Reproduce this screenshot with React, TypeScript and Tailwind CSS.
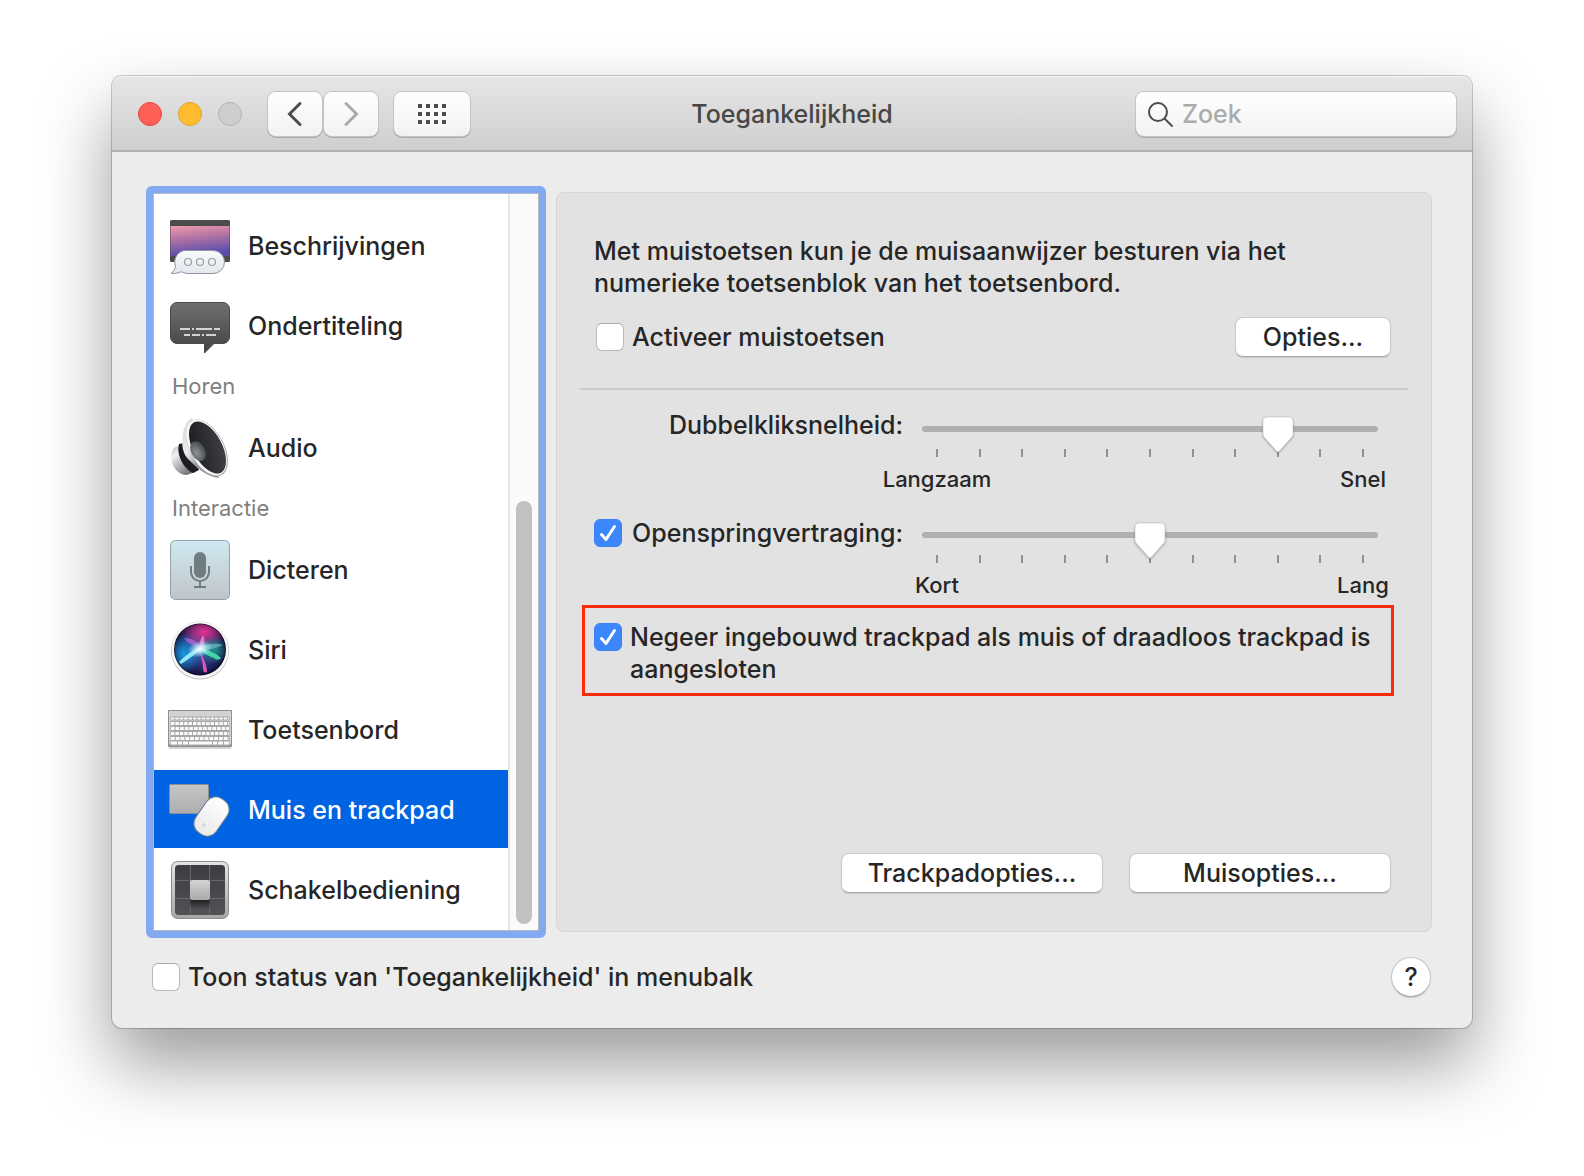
import React from 'react';

type RowProps = {
  label: string;
  icon: React.ReactNode;
  selected?: boolean;
};

const DescriptionsIcon = () => (
  <svg width="64" height="60" viewBox="0 0 64 60" aria-hidden="true">
    <defs>
      <linearGradient id="desc-sky" x1="0" y1="0" x2="0.2" y2="1">
        <stop offset="0" stopColor="#ee9bac" />
        <stop offset="0.4" stopColor="#b877a5" />
        <stop offset="1" stopColor="#5a4bab" />
      </linearGradient>
      <linearGradient id="desc-bubble" x1="0" y1="0" x2="0" y2="1">
        <stop offset="0" stopColor="#fafbfd" />
        <stop offset="1" stopColor="#e3e6ec" />
      </linearGradient>
    </defs>
    <rect x="2" y="4" width="60" height="42" rx="1.5" fill="#4b4b4d" />
    <rect x="2.5" y="10" width="59" height="30" fill="url(#desc-sky)" />
    <path
      d="M20 34.500h25a11.500 11.500 0 0 1 0 23H20c-4 0-5.500-2-8-1.500-3 1.500-6 1.700-9 1.300 3-1.500 4-4 4.500-7.300A11.500 11.500 0 0 1 20 34.500z"
      fill="url(#desc-bubble)"
      stroke="#8f94a3"
      strokeWidth="1"
    />
    <g fill="none" stroke="#9a9da5" strokeWidth="1.2">
      <circle cx="20" cy="46" r="3.500" />
      <circle cx="32" cy="46" r="3.500" />
      <circle cx="44" cy="46" r="3.500" />
    </g>
  </svg>
);

const CaptionsIcon = () => (
  <svg width="64" height="60" viewBox="0 0 64 60" aria-hidden="true">
    <defs>
      <linearGradient id="cap-fill" x1="0" y1="0" x2="0" y2="1">
        <stop offset="0" stopColor="#707070" />
        <stop offset="1" stopColor="#424242" />
      </linearGradient>
    </defs>
    <path
      d="M9 6.500h46a6.500 6.500 0 0 1 6.500 6.500v28a6.500 6.500 0 0 1-6.500 6.500H46L36.500 57v-9.500H9A6.500 6.500 0 0 1 2.500 41V13A6.500 6.500 0 0 1 9 6.500z"
      fill="url(#cap-fill)"
      stroke="#4a4a4a"
    />
    <g stroke="#d4d4d4" strokeWidth="2">
      <path d="M12 33h10M24 33h2M28 33h16M46 33h6" />
      <path d="M16 39h6M24 39h8M34 39h2M38 39h10" />
    </g>
  </svg>
);

const AudioIcon = () => (
  <svg width="64" height="64" viewBox="0 0 64 64" aria-hidden="true">
    <defs>
      <linearGradient id="aud-magnet" x1="0" y1="0" x2="0.600" y2="1">
        <stop offset="0" stopColor="#b9b9bf" />
        <stop offset="0.300" stopColor="#f1f1f4" />
        <stop offset="1" stopColor="#74747c" />
      </linearGradient>
      <linearGradient id="aud-side" x1="0" y1="0" x2="0.700" y2="1">
        <stop offset="0" stopColor="#d6d6da" />
        <stop offset="0.450" stopColor="#ededf0" />
        <stop offset="0.700" stopColor="#9b9ba3" />
        <stop offset="1" stopColor="#8a8a91" />
      </linearGradient>
      <linearGradient id="aud-cone" x1="0" y1="0" x2="1" y2="0.600">
        <stop offset="0" stopColor="#18191b" />
        <stop offset="1" stopColor="#3c3e41" />
      </linearGradient>
      <radialGradient id="aud-cap" cx="0.350" cy="0.550" r="0.600">
        <stop offset="0" stopColor="#8f9397" />
        <stop offset="1" stopColor="#4a4d50" />
      </radialGradient>
    </defs>
    <path d="M9 30c-5 2-6.500 8-5.500 15 2 8 8 14 15 14l9-3z" fill="url(#aud-magnet)" />
    <path d="M11 28c-3 9 4 25 14 29l6-3-15-27z" fill="#1d1d1f" />
    <path d="M24 2c-5 2-9 10-9.500 20-1 9 1 16 5.500 21 8 8 17 17 31 19z" fill="url(#aud-side)" />
    <ellipse cx="39" cy="32" rx="17" ry="31" transform="rotate(-28 39 32)" fill="#a3a3a8" />
    <ellipse cx="38.500" cy="31.500" rx="16.500" ry="30.500" transform="rotate(-28 38.500 31.500)" fill="#f6f6f7" />
    <ellipse cx="39.500" cy="31.500" rx="14.500" ry="28.500" transform="rotate(-28 39.500 31.500)" fill="url(#aud-cone)" />
    <ellipse cx="30" cy="35" rx="7" ry="10.500" transform="rotate(-28 30 35)" fill="url(#aud-cap)" />
  </svg>
);

const DictationIcon = () => (
  <svg width="64" height="64" viewBox="0 0 64 64" aria-hidden="true">
    <defs>
      <linearGradient id="dic-fill" x1="0" y1="0" x2="0" y2="1">
        <stop offset="0" stopColor="#d0e8f1" />
        <stop offset="1" stopColor="#bfc5c8" />
      </linearGradient>
    </defs>
    <rect x="2.500" y="2.500" width="59" height="59" rx="5" fill="url(#dic-fill)" stroke="#93a1a7" />
    <rect x="26" y="14" width="12" height="26" rx="6" fill="#6f7c81" />
    <path d="M23 28v6a9 9 0 0 0 18 0v-6M32 43v6M26 49h12" fill="none" stroke="#6f7c81" strokeWidth="2" />
  </svg>
);

const SiriIcon = () => (
  <svg width="64" height="64" viewBox="0 0 64 64" aria-hidden="true">
    <defs>
      <radialGradient id="siri-base">
        <stop offset="0" stopColor="#3b6fb5" />
        <stop offset="0.600" stopColor="#27367c" />
        <stop offset="1" stopColor="#14123f" />
      </radialGradient>
      <radialGradient id="siri-pink">
        <stop offset="0" stopColor="#e8308f" />
        <stop offset="1" stopColor="#e8308f" stopOpacity="0" />
      </radialGradient>
      <radialGradient id="siri-blue">
        <stop offset="0" stopColor="#159be0" />
        <stop offset="1" stopColor="#159be0" stopOpacity="0" />
      </radialGradient>
      <radialGradient id="siri-teal">
        <stop offset="0" stopColor="#1f8f84" />
        <stop offset="1" stopColor="#1f8f84" stopOpacity="0" />
      </radialGradient>
      <radialGradient id="siri-glow">
        <stop offset="0" stopColor="#ffffff" />
        <stop offset="0.400" stopColor="#c8f4ff" stopOpacity="0.800" />
        <stop offset="1" stopColor="#8fe0ff" stopOpacity="0" />
      </radialGradient>
      <clipPath id="siri-clip">
        <circle cx="32" cy="31.500" r="25.500" />
      </clipPath>
    </defs>
    <circle cx="32" cy="32.500" r="29" fill="#bdbdbd" />
    <circle cx="32" cy="32" r="28.500" fill="#f7f7f7" />
    <circle cx="32" cy="31.500" r="26" fill="#0b0a26" />
    <g clipPath="url(#siri-clip)">
      <circle cx="32" cy="31.500" r="25" fill="url(#siri-base)" />
      <ellipse cx="36" cy="14" rx="24" ry="16" fill="url(#siri-pink)" />
      <ellipse cx="16" cy="36" rx="16" ry="20" fill="url(#siri-blue)" />
      <ellipse cx="46" cy="32" rx="14" ry="14" fill="url(#siri-teal)" />
      <path d="M11 44C19 36 27 30 34 30c-5 5-12 10-21 16z" fill="#9df3ff" opacity="0.900" />
      <path d="M31 30c8-5 18-5 24-3-6 3-15 5-22 5z" fill="#6fbfc0" opacity="0.700" />
      <path d="M32 30c8 2 16 5 21 10-2 2-5 2-7 0-6-2-11-5-15-9z" fill="#47e3a8" opacity="0.900" />
      <path d="M31 32c4 7 8 14 8 22-2 1-4 0-4-3 0-6-2-13-4-19z" fill="#f25cb5" opacity="0.900" />
      <path d="M31 31c0-5 1-9 4-14 2 5 2 9 0 14z" fill="#f78fc8" opacity="0.800" />
      <path d="M16 20c8 0 14 3 18 11-8-2-14-5-18-11z" fill="#c86be0" opacity="0.600" />
      <ellipse cx="32" cy="31" rx="13" ry="8" fill="url(#siri-glow)" transform="rotate(-15 32 31)" />
    </g>
  </svg>
);

const KEY_ROWS = [
  { y: 9.5, h: 2, dash: '3.400 1' },
  { y: 14, h: 3, dash: '3.400 1' },
  { y: 19, h: 3, dash: '3.600 1' },
  { y: 24, h: 3, dash: '3.400 1' },
  { y: 29, h: 3, dash: '3.800 1' },
];

const KeyboardIcon = () => (
  <svg width="64" height="44" viewBox="0 0 64 44" aria-hidden="true">
    <rect x="1" y="4" width="62" height="37" fill="#b5b5b5" opacity="0.600" />
    <rect x="0.500" y="2.500" width="63" height="36" fill="#d2d2d2" stroke="#8f8f8f" />
    <rect x="1" y="36" width="62" height="2" fill="#a3a3a3" />
    {KEY_ROWS.map((row) => (
      <g key={row.y}>
        <rect x="2.500" y={row.y - 1} width="59" height={row.h + 2} fill="#a8a8a8" />
        <line
          x1="3"
          x2="61"
          y1={row.y + row.h / 2}
          y2={row.y + row.h / 2}
          stroke="#fafafa"
          strokeWidth={row.h}
          strokeDasharray={row.dash}
        />
      </g>
    ))}
    <rect x="2.500" y="33" width="59" height="4" fill="#a8a8a8" />
    <path d="M3 35h6M10 35h4M15 35h5M21 35h23M45 35h4M50 35h5M56 35h5" stroke="#fafafa" strokeWidth="3" />
  </svg>
);

const MouseIcon = () => (
  <svg width="64" height="64" viewBox="0 0 64 64" aria-hidden="true">
    <defs>
      <linearGradient id="mou-pad" x1="0" y1="0" x2="0" y2="1">
        <stop offset="0" stopColor="#c6c6c6" />
        <stop offset="1" stopColor="#adadad" />
      </linearGradient>
      <linearGradient id="mou-body" x1="0" y1="0" x2="0" y2="1">
        <stop offset="0" stopColor="#ffffff" />
        <stop offset="1" stopColor="#e9e9e9" />
      </linearGradient>
    </defs>
    <rect x="1.500" y="6.500" width="39" height="29" rx="1" fill="url(#mou-pad)" stroke="#8e8e92" />
    <rect
      x="31"
      y="18"
      width="25"
      height="41"
      rx="11"
      transform="rotate(35 43.500 38.500)"
      fill="url(#mou-body)"
      stroke="#66789a"
      strokeWidth="1"
    />
    <circle cx="36" cy="47" r="1.800" fill="#d2d2d2" />
  </svg>
);

const SwitchIcon = () => (
  <svg width="64" height="64" viewBox="0 0 64 64" aria-hidden="true">
    <defs>
      <linearGradient id="swi-frame" x1="0" y1="0" x2="0" y2="1">
        <stop offset="0" stopColor="#e4e4e4" />
        <stop offset="1" stopColor="#a6a6a6" />
      </linearGradient>
      <linearGradient id="swi-bg" x1="0" y1="0" x2="0" y2="1">
        <stop offset="0" stopColor="#3b3d40" />
        <stop offset="1" stopColor="#505256" />
      </linearGradient>
      <linearGradient id="swi-key" x1="0" y1="0" x2="0" y2="1">
        <stop offset="0" stopColor="#d4d4d4" />
        <stop offset="1" stopColor="#a9a9a9" />
      </linearGradient>
      <linearGradient id="swi-shade" x1="0" y1="0" x2="0" y2="1">
        <stop offset="0" stopColor="#000000" stopOpacity="0.700" />
        <stop offset="1" stopColor="#000000" stopOpacity="0" />
      </linearGradient>
    </defs>
    <rect x="3.500" y="3.500" width="57" height="57" rx="6" fill="url(#swi-frame)" stroke="#8d8d8d" />
    <rect x="7" y="7" width="50" height="50" rx="3.500" fill="url(#swi-bg)" />
    <path d="M22.500 7v50M41.500 7v50M7 22.500h50M7 40.500h50" stroke="#66686c" strokeWidth="1" />
    <rect x="22" y="40" width="20" height="11" fill="url(#swi-shade)" />
    <rect x="22" y="22" width="20" height="20" rx="2" fill="url(#swi-key)" />
  </svg>
);

const SidebarRow: React.FC<RowProps> = ({ label, icon, selected }) => (
  <li className="py-px">
    <button
      type="button"
      className={
        selected
          ? 'flex h-[78px] w-full items-center bg-[#0063e1] pt-0.5 pl-3.5 text-left font-medium text-white'
          : 'flex h-[78px] w-full items-center pt-0.5 pl-3.5 text-left'
      }
    >
      <span className="flex w-16 shrink-0 justify-center">{icon}</span>
      <span className="ml-4">{label}</span>
    </button>
  </li>
);

const SidebarHeading: React.FC<{ children: React.ReactNode }> = ({ children }) => (
  <li className="flex h-[42px] items-center pl-[18px] text-[22px] font-normal text-[#808080]">{children}</li>
);

type CheckBoxProps = {
  id: string;
  checked?: boolean;
};

const CheckBox: React.FC<CheckBoxProps> = ({ id, checked }) => (
  <span className="relative block size-7 shrink-0">
    <input
      id={id}
      type="checkbox"
      defaultChecked={checked}
      className="peer block size-7 appearance-none rounded-md border border-[#b9b9b9] border-t-[#a8a8a8] bg-white checked:border-[#3b82f7] checked:bg-[#3d87fe]"
    />
    <svg
      className="pointer-events-none absolute inset-0 hidden peer-checked:block"
      width="28"
      height="28"
      viewBox="0 0 28 28"
      aria-hidden="true"
    >
      <path
        d="M7.500 15.500l4.500 5L20.500 7.500"
        fill="none"
        stroke="#fff"
        strokeWidth="3"
        strokeLinecap="round"
        strokeLinejoin="round"
      />
    </svg>
  </span>
);

const PushButton: React.FC<{ className: string; children: React.ReactNode }> = ({ className, children }) => (
  <button
    type="button"
    className={`h-10 rounded-lg border border-[#c9c9c9] border-b-[#a8a8a8] bg-white shadow-[0_1px_1px_rgba(0,0,0,0.12)] ${className}`}
  >
    {children}
  </button>
);

type SliderProps = {
  id: string;
  value: number;
  low: string;
  high: string;
};

const Slider: React.FC<SliderProps> = ({ id, value, low, high }) => {
  const [current, setCurrent] = React.useState(value);

  return (
    <div className="min-w-0 flex-1">
      <div className="relative h-10 pt-[9px]">
        <input
          id={id}
          type="range"
          min={0}
          max={10}
          value={current}
          onChange={(e) => setCurrent(Number(e.target.value))}
          className="block h-1.5 w-full appearance-none rounded-full bg-[#b0b0b0] [&::-webkit-slider-thumb]:h-8 [&::-webkit-slider-thumb]:w-[30px] [&::-webkit-slider-thumb]:appearance-none [&::-webkit-slider-thumb]:bg-transparent"
        />
        <div className="mx-3.5 mt-[17px] flex justify-between">
          {Array.from({ length: 11 }, (_, i) => (
            <span key={i} className="h-2 w-0.5 bg-[#919191]" />
          ))}
        </div>
        <div className="pointer-events-none absolute inset-x-[15px] top-0">
          <svg
            className="absolute -top-px -translate-x-1/2 drop-shadow-[0_1px_1px_rgba(0,0,0,0.3)]"
            style={{ left: `${current * 10}%` }}
            width="32"
            height="38"
            viewBox="0 0 32 38"
            aria-hidden="true"
          >
            <path
              d="M5 1h22a4 4 0 0 1 4 4v13c0 1.500-.5 2.500-1.500 3.500L17 35.500c-.7.700-1.300.7-2 0L2.500 21.500C1.500 20.500 1 19.500 1 18V5a4 4 0 0 1 4-4z"
              fill="#fff"
              stroke="#c4c4c4"
              strokeWidth="0.600"
            />
          </svg>
        </div>
      </div>
      <div className="-mx-10 mt-2 flex justify-between text-[22px] leading-7">
        <span className="w-[110px] text-center">{low}</span>
        <span className="w-[110px] text-center">{high}</span>
      </div>
    </div>
  );
};

const Toolbar = () => (
  <header className="grid h-[76px] grid-cols-[1fr_auto_1fr] items-center rounded-t-[10px] border-b-2 border-[#b0b0b0] bg-linear-to-b from-[#e6e6e6] to-[#cfcfcf] px-4 pt-0.5 shadow-[inset_0_1px_0_#f4f4f4]">
    <div className="flex items-center">
      <div className="ml-2.5 flex gap-4">
        <button type="button" aria-label="Sluit" className="size-6 rounded-full border border-[#e2463f] bg-[#fe5f57]" />
        <button type="button" aria-label="Minimaliseer" className="size-6 rounded-full border border-[#e1a325] bg-[#febc2e]" />
        <button type="button" aria-label="Zoom" className="size-6 rounded-full border border-[#b3b3b3] bg-[#cecece]" />
      </div>
      <div className="ml-[26px] flex gap-0.5">
        <button
          type="button"
          aria-label="Vorige"
          className="flex h-11 w-[54px] items-center justify-center rounded-lg bg-linear-to-b from-white to-[#f2f2f2] shadow-[0_0_0_1px_#c4c4c4,0_1px_0_1px_#a9a9a9]"
        >
          <svg width="16" height="26" viewBox="0 0 16 26" fill="none" stroke="#4d4d4d" strokeWidth="3" strokeLinecap="round">
            <path d="M13 2.500L2.500 13 13 23.500" />
          </svg>
        </button>
        <button
          type="button"
          aria-label="Volgende"
          className="flex h-11 w-[54px] items-center justify-center rounded-lg bg-linear-to-b from-white to-[#f2f2f2] shadow-[0_0_0_1px_#c4c4c4,0_1px_0_1px_#a9a9a9]"
        >
          <svg width="16" height="26" viewBox="0 0 16 26" fill="none" stroke="#a9a9a9" strokeWidth="3" strokeLinecap="round">
            <path d="M3 2.500L13.500 13 3 23.500" />
          </svg>
        </button>
      </div>
      <button
        type="button"
        aria-label="Toon alles"
        className="ml-4 flex h-11 w-[76px] items-center justify-center rounded-lg bg-linear-to-b from-white to-[#f2f2f2] shadow-[0_0_0_1px_#c4c4c4,0_1px_0_1px_#a9a9a9]"
      >
        <svg width="28" height="20" viewBox="0 0 28 20" fill="#4d4d4d">
          {[0, 8, 16].map((y) => (
            <path key={y} d={`M0 ${y}h4v4h-4zM8 ${y}h4v4h-4zM16 ${y}h4v4h-4zM24 ${y}h4v4h-4z`} />
          ))}
        </svg>
      </button>
    </div>
    <h1 className="text-[#474747]">Toegankelijkheid</h1>
    <label className="flex h-11 w-80 items-center justify-self-end rounded-lg bg-linear-to-b from-white to-[#f2f2f2] pl-3 shadow-[0_0_0_1px_#c4c4c4,0_1px_0_1px_#a9a9a9]">
      <svg
        className="mt-0.5 shrink-0"
        width="26"
        height="26"
        viewBox="0 0 26 26"
        fill="none"
        stroke="#4d4d4d"
        strokeWidth="2"
        strokeLinecap="round"
      >
        <circle cx="10" cy="10" r="9" />
        <path d="M17 17l7 7" />
      </svg>
      <input
        type="search"
        aria-label="Zoek"
        placeholder="Zoek"
        className="ml-2 w-full min-w-0 bg-transparent outline-none placeholder:text-[#ababab]"
      />
    </label>
  </header>
);

const Sidebar = () => (
  <nav className="w-[400px] shrink-0 rounded-md border-[7px] border-[#83a9f0]">
    <div className="flex h-full border border-[#b4b8c4] bg-white">
      <ul className="flex-1 pt-[11px] pb-px">
        <SidebarRow label="Beschrijvingen" icon={<DescriptionsIcon />} />
        <SidebarRow label="Ondertiteling" icon={<CaptionsIcon />} />
        <SidebarHeading>Horen</SidebarHeading>
        <SidebarRow label="Audio" icon={<AudioIcon />} />
        <SidebarHeading>Interactie</SidebarHeading>
        <SidebarRow label="Dicteren" icon={<DictationIcon />} />
        <SidebarRow label="Siri" icon={<SiriIcon />} />
        <SidebarRow label="Toetsenbord" icon={<KeyboardIcon />} />
        <SidebarRow label="Muis en trackpad" icon={<MouseIcon />} selected />
        <SidebarRow label="Schakelbediening" icon={<SwitchIcon />} />
      </ul>
      <div className="flex w-[30px] flex-col justify-end border-l-2 border-[#e6e6e6] bg-[#fafafa] pr-1.5 pb-1.5 pl-1.5">
        <div className="h-[423px] rounded-full bg-[#c1c1c1]" />
      </div>
    </div>
  </nav>
);

const MousePanel = () => (
  <section className="my-1.5 flex min-w-0 flex-1 flex-col rounded-lg border border-[#d6d6d6] bg-[#e2e2e2] px-[23px] pt-[42px] pb-[38px]">
    <p className="max-w-[740px] px-3.5 leading-8">
      Met muistoetsen kun je de muisaanwijzer besturen via het numerieke toetsenblok van het toetsenbord.
    </p>
    <div className="mt-[18px] flex items-center justify-between pr-[17px] pl-4">
      <div className="flex items-center gap-2">
        <CheckBox id="mouse-keys" />
        <label htmlFor="mouse-keys">Activeer muistoetsen</label>
      </div>
      <PushButton className="w-[156px]">Opties...</PushButton>
    </div>
    <hr className="mt-[31px] border-t-2 border-[#cbcbcb]" />
    <div className="mt-[27px] flex gap-[19px] pr-[30px] pl-3.5">
      <label htmlFor="double-click" className="w-[309px] text-right leading-4">
        Dubbelkliksnelheid:
      </label>
      <Slider id="double-click" value={8} low="Langzaam" high="Snel" />
    </div>
    <div className="mt-[30px] flex gap-[19px] pr-[30px] pl-3.5">
      <div className="flex h-5 w-[309px] items-center justify-between">
        <CheckBox id="spring" checked />
        <label htmlFor="spring">Openspringvertraging:</label>
      </div>
      <Slider id="spring-delay" value={5} low="Kort" high="Lang" />
    </div>
    <div className="mt-1.5 mr-3.5 ml-0.5 flex gap-2 border-[3px] border-[#fb2a0a] px-[9px] pt-[13px] pb-2">
      <div className="pt-0.5">
        <CheckBox id="ignore-trackpad" checked />
      </div>
      <label htmlFor="ignore-trackpad" className="leading-8">
        Negeer ingebouwd trackpad als muis of draadloos trackpad is aangesloten
      </label>
    </div>
    <div className="mt-auto flex justify-end gap-[26px] pr-[17px]">
      <PushButton className="w-[262px]">Trackpadopties...</PushButton>
      <PushButton className="w-[262px]">Muisopties...</PushButton>
    </div>
  </section>
);

export default function App() {
  return (
    <div className="min-h-screen bg-white px-28 pt-[76px] pb-[148px] font-['Inter',sans-serif] text-[25px] leading-8 font-[450] text-[#262626]">
      <main className="rounded-[10px] bg-[#ececec] shadow-[0_0_0_1px_rgba(0,0,0,0.2),0_36px_72px_rgba(0,0,0,0.4)]">
        <Toolbar />
        <div className="flex gap-2.5 pt-[34px] pr-10 pl-[34px]">
          <Sidebar />
          <MousePanel />
        </div>
        <footer className="flex items-center justify-between pt-[19px] pr-[41px] pb-[31px] pl-10">
          <div className="flex items-center gap-2">
            <CheckBox id="menu-status" />
            <label htmlFor="menu-status">Toon status van 'Toegankelijkheid' in menubalk</label>
          </div>
          <button
            type="button"
            aria-label="Help"
            className="size-10 rounded-full border border-[#c6c6c6] border-b-[#a8a8a8] bg-white font-medium shadow-[0_1px_1px_rgba(0,0,0,0.15)]"
          >
            ?
          </button>
        </footer>
      </main>
    </div>
  );
}
